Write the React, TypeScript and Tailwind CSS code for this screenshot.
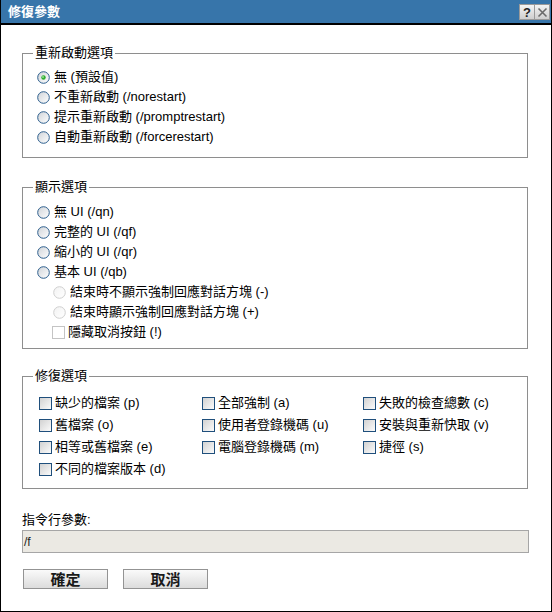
import React from "react";

const font = { fontFamily: '"Liberation Sans", "Noto Sans CJK TC", sans-serif' };

function Radio({ checked = false, disabled = false }: { checked?: boolean; disabled?: boolean }) {
  const id = checked ? "rg-on" : disabled ? "rg-dis" : "rg-off";
  return (
    <svg width="13" height="13" viewBox="0 0 13 13" className="shrink-0">
      <defs>
        <linearGradient id={id} x1="0" y1="0" x2="1" y2="1">
          <stop offset="0" stopColor={disabled ? "#f2f2f2" : "#cfd3d8"} />
          <stop offset="1" stopColor="#ffffff" />
        </linearGradient>
      </defs>
      <circle cx="6.5" cy="6.5" r="5.8" fill={`url(#${id})`} stroke={disabled ? "#cfcfcf" : "#2d5f8e"} strokeWidth="1" />
      {checked ? (
        <>
          <circle cx="6.5" cy="6.5" r="2.2" fill="#2fae2f" />
          <circle cx="6" cy="6" r="0.9" fill="#9be59b" />
        </>
      ) : null}
    </svg>
  );
}

function Check({ disabled = false }: { disabled?: boolean }) {
  return (
    <span
      className={`block h-[13px] w-[13px] shrink-0 border ${
        disabled
          ? "border-[#c4c4c4] bg-white"
          : "border-[#1f4f7c] bg-gradient-to-br from-[#d2d2d2] to-[#fbfbfb]"
      }`}
    />
  );
}

function RadioRow({ label, checked, disabled, indent }: { label: string; checked?: boolean; disabled?: boolean; indent?: boolean }) {
  return (
    <div className={`flex h-[20px] items-center gap-[4px] ${indent ? "pl-[16px]" : ""}`}>
      <Radio checked={checked} disabled={disabled} />
      <span>{label}</span>
    </div>
  );
}

function CheckRow({ label, disabled }: { label: string; disabled?: boolean }) {
  return (
    <div className="flex h-[20px] items-center gap-[3px]">
      <Check disabled={disabled} />
      <span>{label}</span>
    </div>
  );
}

function Group({ title, className, children }: { title: string; className?: string; children: React.ReactNode }) {
  return (
    <fieldset className={`w-[506px] border border-[#8e8e8e] ${className ?? ""}`}>
      <legend className="ml-[10px] px-[2px] text-[13px] leading-[16px] text-black">{title}</legend>
      {children}
    </fieldset>
  );
}

const repairs = [
  ["缺少的檔案 (p)", "全部強制 (a)", "失敗的檢查總數 (c)"],
  ["舊檔案 (o)", "使用者登錄機碼 (u)", "安裝與重新快取 (v)"],
  ["相等或舊檔案 (e)", "電腦登錄機碼 (m)", "捷徑 (s)"],
  ["不同的檔案版本 (d)"],
];

export default function App() {
  return (
    <div style={font} className="flex h-[612px] w-[552px] flex-col border-x border-b border-black bg-white text-[13px] text-black">
      <div className="flex h-[25px] shrink-0 items-start justify-between border-b-2 border-black bg-[#3775aa] pl-[7px] pr-[1px]">
        <span className="mt-[4px] text-[13px] font-bold leading-[15px] text-white">修復參數</span>
        <div className="mt-[4px] flex">
          <span className="flex h-[16px] w-[16px] items-center justify-center border border-[#9a9a9a] bg-gradient-to-b from-[#f4f4f4] to-[#cfcfcf] text-[13px] font-bold leading-none text-[#222]">
            ?
          </span>
          <span className="flex h-[16px] w-[15px] items-center justify-center border border-l-0 border-[#9a9a9a] bg-gradient-to-b from-[#f4f4f4] to-[#cfcfcf]">
            <svg width="11" height="11" viewBox="0 0 11 11">
              <path d="M1.5 1.5l8 8M9.5 1.5l-8 8" stroke="#6a6a6a" strokeWidth="1.6" />
            </svg>
          </span>
        </div>
      </div>

      <div className="flex flex-col pl-[21px]">
        <Group title="重新啟動選項" className="mt-[20px]">
          <div className="pb-[10px] pl-[14px] pt-[6px]">
            <RadioRow label="無 (預設值)" checked />
            <RadioRow label="不重新啟動 (/norestart)" />
            <RadioRow label="提示重新啟動 (/promptrestart)" />
            <RadioRow label="自動重新啟動 (/forcerestart)" />
          </div>
        </Group>

        <Group title="顯示選項" className="mt-[21px]">
          <div className="pb-[6px] pl-[14px] pt-[7px]">
            <RadioRow label="無 UI (/qn)" />
            <RadioRow label="完整的 UI (/qf)" />
            <RadioRow label="縮小的 UI (/qr)" />
            <RadioRow label="基本 UI (/qb)" />
            <RadioRow label="結束時不顯示強制回應對話方塊 (-)" disabled indent />
            <RadioRow label="結束時顯示強制回應對話方塊 (+)" disabled indent />
            <div className="pl-[15px]">
              <CheckRow label="隱藏取消按鈕 (!)" disabled />
            </div>
          </div>
        </Group>

        <Group title="修復選項" className="mt-[19px]">
          <div className="flex flex-col pb-[8px] pl-[16px] pt-[8px]">
            {repairs.map((row, i) => (
              <div key={i} className="grid h-[22px] grid-cols-[163px_161px_1fr] items-center">
                {row.map((label) => (
                  <CheckRow key={label} label={label} />
                ))}
              </div>
            ))}
          </div>
        </Group>

        <div className="mt-[23px] text-[13px] leading-[15px]">指令行參數:</div>
        <div className="mt-[3px] flex h-[23px] w-[507px] items-center border border-[#a6a6a6] bg-[#ebe9e3] pl-[1px] text-[12px] text-[#222]">
          /f
        </div>

        <div className="mt-[16px] flex gap-[15px] pl-[1px]">
          {["確定", "取消"].map((b) => (
            <button
              key={b}
              type="button"
              className="flex h-[20px] w-[85px] items-center justify-center border border-[#939393] bg-gradient-to-b from-[#fafafa] to-[#dcdcdc] text-[15px] font-bold leading-none text-[#1a1a1a]"
            >
              {b}
            </button>
          ))}
        </div>
      </div>
    </div>
  );
}
